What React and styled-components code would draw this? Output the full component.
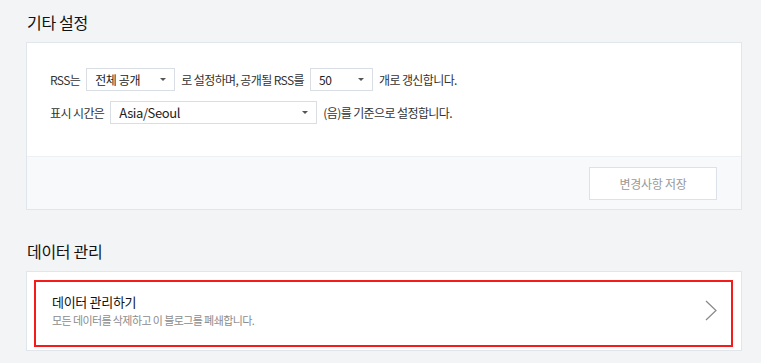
import React from 'react';
import styled, { createGlobalStyle } from 'styled-components';

const GlobalStyle = createGlobalStyle`
  html, body {
    margin: 0;
    padding: 0;
    background: #f3f4f6;
  }
  body {
    font-family: "Noto Sans CJK KR", "Noto Sans", sans-serif;
    color: #333;
  }
`;

const Page = styled.div`
  box-sizing: border-box;
  width: 761px;
  height: 363px;
  padding: 11px 19px 0 26px;
  overflow: hidden;
`;

const Section = styled.section`
  & + & {
    margin-top: 30px;
  }
`;

const SectionTitle = styled.h2`
  margin: 0 0 9px 1px;
  font-size: 16px;
  font-weight: 400;
  line-height: 22px;
  color: #111;
  letter-spacing: -0.3px;
`;

const Panel = styled.div`
  background: #fff;
  border: 1px solid #e1e5ec;
`;

const PanelBody = styled.div`
  display: flex;
  flex-direction: column;
  gap: 10px;
  padding: 25px 23px 32px;
`;

const Row = styled.div`
  display: flex;
  align-items: center;
  gap: 6px;
  height: 23px;
  font-size: 12px;
  color: #333;
  letter-spacing: -0.6px;
`;

const SelectBox = styled.div`
  box-sizing: border-box;
  display: flex;
  align-items: center;
  justify-content: space-between;
  width: ${(p) => p.$width}px;
  height: 23px;
  padding: 0 8px 0 8px;
  border: 1px solid #d9dde4;
  background: #fff;
  font-size: ${(p) => (p.$large ? 13 : 12)}px;
  letter-spacing: -0.4px;
  color: #222;
`;

const Caret = styled.span`
  width: 0;
  height: 0;
  border-left: 3px solid transparent;
  border-right: 3px solid transparent;
  border-top: 3px solid #555;
`;

const Footer = styled.div`
  display: flex;
  justify-content: flex-end;
  padding: 10px 24px 9px;
  background: #f8f9fb;
  border-top: 1px solid #edf0f4;
`;

const SaveButton = styled.button`
  width: 128px;
  height: 33px;
  border: 1px solid #dde2ea;
  background: #fff;
  font-family: inherit;
  font-size: 12px;
  letter-spacing: -0.3px;
  color: #999;
  cursor: pointer;
`;

const DataPanel = styled(Panel)`
  padding: 8px 8px 3px 7px;
`;

const DataItem = styled.div`
  display: flex;
  align-items: center;
  justify-content: space-between;
  padding: 10px 14px 17px 16px;
  border: 2px solid #f51b1b;
  cursor: pointer;
`;

const ItemText = styled.div`
  display: flex;
  flex-direction: column;
`;

const ItemTitle = styled.div`
  font-size: 13px;
  line-height: 20px;
  color: #111;
  letter-spacing: -0.3px;
`;

const ItemDesc = styled.div`
  font-size: 11px;
  line-height: 16px;
  color: #8c8c8c;
  letter-spacing: -0.6px;
`;

const Select = ({ value, width, large }) => (
  <SelectBox $width={width} $large={large}>
    <span>{value}</span>
    <Caret />
  </SelectBox>
);

const Chevron = () => (
  <svg width="12" height="21" viewBox="0 0 12 21" fill="none">
    <polyline points="1,1 11,10.5 1,20" stroke="#888" strokeWidth="1.2" />
  </svg>
);

export default function App() {
  return (
    <Page>
      <GlobalStyle />
      <Section>
        <SectionTitle>기타 설정</SectionTitle>
        <Panel>
          <PanelBody>
            <Row>
              RSS는
              <Select value="전체 공개" width={89} />
              로 설정하며, 공개될 RSS를
              <Select value="50" width={63} />
              개로 갱신합니다.
            </Row>
            <Row>
              표시 시간은
              <Select value="Asia/Seoul" width={207} large />
              (음)를 기준으로 설정합니다.
            </Row>
          </PanelBody>
          <Footer>
            <SaveButton>변경사항 저장</SaveButton>
          </Footer>
        </Panel>
      </Section>
      <Section>
        <SectionTitle>데이터 관리</SectionTitle>
        <DataPanel>
          <DataItem>
            <ItemText>
              <ItemTitle>데이터 관리하기</ItemTitle>
              <ItemDesc>모든 데이터를 삭제하고 이 블로그를 폐쇄합니다.</ItemDesc>
            </ItemText>
            <Chevron />
          </DataItem>
        </DataPanel>
      </Section>
    </Page>
  );
}
